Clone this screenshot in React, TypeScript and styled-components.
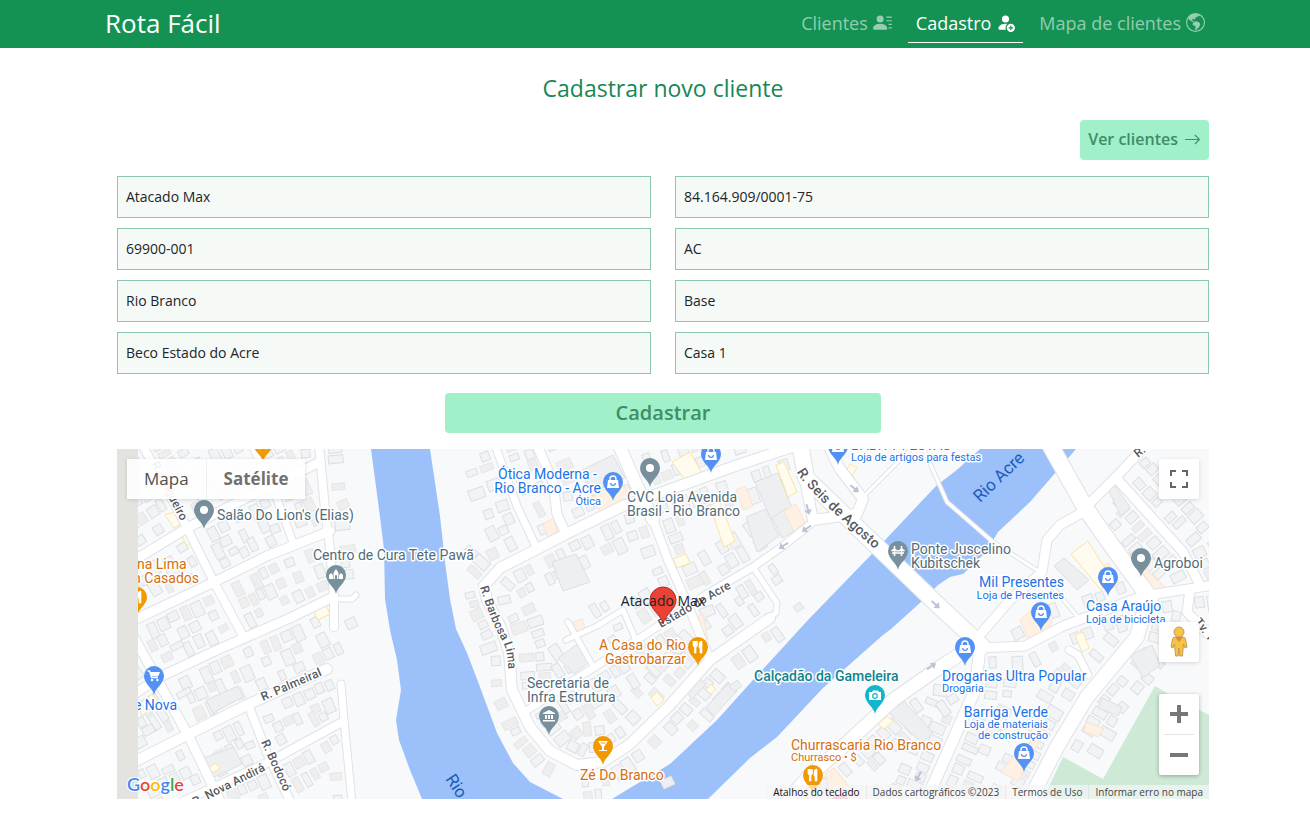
import React from "react";
import styled, { createGlobalStyle, css } from "styled-components";
import {
  BsArrowRight,
  BsGlobeAmericas,
  BsPersonFillAdd,
  BsPersonLinesFill,
} from "react-icons/bs";

const GlobalStyle = createGlobalStyle`
  *, *::before, *::after { box-sizing: border-box; }
  body {
    margin: 0;
    background: #fff;
    color: #212529;
    font-family: "Open Sans", "Noto Sans", sans-serif;
    font-size: 16px;
  }
  button, input { font-family: inherit; }
`;

/* ---------- Header ---------- */

const Header = styled.header`
  background: #149253;
`;

const HeaderInner = styled.div`
  display: flex;
  align-items: center;
  justify-content: space-between;
  max-width: 1116px;
  height: 48px;
  margin: 0 auto;
  padding-bottom: 2px;
`;

const Brand = styled.a`
  padding-left: 8px;
  color: #fff;
  font-size: 26px;
  line-height: 40px;
  text-decoration: none;
`;

const Nav = styled.nav`
  display: flex;
  gap: 8px;
`;

const NavLink = styled.a<{ $active?: boolean }>`
  display: flex;
  align-items: center;
  gap: 5px;
  height: 40px;
  padding: 0 8px;
  border-bottom: 1px solid ${(p) => (p.$active ? "#fff" : "transparent")};
  color: ${(p) => (p.$active ? "#fff" : "rgba(255, 255, 255, 0.55)")};
  font-size: 18px;
  font-weight: ${(p) => (p.$active ? 500 : 400)};
  text-decoration: none;
  white-space: nowrap;
`;

/* ---------- Form ---------- */

const Page = styled.main`
  max-width: 1116px;
  margin: 0 auto;
  padding: 24px 4px 24px 20px;
`;

const Title = styled.h1`
  margin: 0;
  color: #198754;
  font-size: 23px;
  font-weight: 400;
  line-height: 32px;
  text-align: center;
`;

const Actions = styled.div`
  display: flex;
  justify-content: flex-end;
  margin: 16px 0;
`;

const buttonLook = css`
  height: 40px;
  border: 0;
  border-radius: 4px;
  background: #a0f1c9;
  color: #408c67;
  font-weight: 600;
`;

const ListButton = styled.button`
  ${buttonLook}
  display: flex;
  align-items: center;
  gap: 6px;
  padding: 0 8px 2px;
  font-size: 16px;
`;

const Fields = styled.div`
  display: grid;
  grid-template-columns: 1fr 1fr;
  gap: 10px 24px;
`;

const Field = styled.input`
  width: 100%;
  height: 42px;
  padding: 0 8px 2px;
  border: 1px solid #8ac9a9;
  border-radius: 0;
  background: #f5faf7;
  color: #212529;
  font-size: 14px;
`;

const SubmitButton = styled.button`
  ${buttonLook}
  display: block;
  width: 40%;
  margin: 19px auto 16px;
  padding-bottom: 2px;
  font-size: 20px;
`;

/* ---------- Map shell and controls ---------- */

const MapBox = styled.section`
  position: relative;
  height: 350px;
  overflow: hidden;
  background: #e5e3df;
`;

const MapCanvas = styled.svg`
  display: block;
  width: 100%;
  height: 100%;
  font-family: Roboto, sans-serif;
`;

const MapTypes = styled.div`
  position: absolute;
  top: 10px;
  left: 10px;
  display: flex;
  border-radius: 2px;
  box-shadow: 0 1px 4px rgba(0, 0, 0, 0.15);
  opacity: 0.92;
`;

const MapTypeButton = styled.button<{ $strong?: boolean }>`
  height: 40px;
  padding: 0 17px 2px;
  border: 0;
  border-left: ${(p) => (p.$strong ? "1px solid #f0f0f0" : "0")};
  background: #fff;
  color: ${(p) => (p.$strong ? "#666" : "#444")};
  font-size: 17px;
  font-weight: ${(p) => (p.$strong ? 700 : 400)};
`;

const SideControls = styled.div`
  position: absolute;
  top: 10px;
  right: 10px;
  bottom: 24px;
  display: flex;
  flex-direction: column;
  width: 40px;
`;

const SquareButton = styled.button`
  display: grid;
  place-items: center;
  width: 40px;
  height: 40px;
  padding: 0;
  border: 0;
  border-radius: 2px;
  background: rgba(255, 255, 255, 0.92);
  box-shadow: 0 1px 4px rgba(0, 0, 0, 0.15);
`;

const PegmanButton = styled(SquareButton)`
  margin-top: auto;
  margin-bottom: 32px;
`;

const ZoomGroup = styled.div`
  border-radius: 2px;
  background: #fff;
  box-shadow: 0 1px 4px rgba(0, 0, 0, 0.3);
`;

const ZoomButton = styled(SquareButton)`
  background: none;
  box-shadow: none;
`;

const ZoomRule = styled.div`
  height: 1px;
  margin: 0 5px;
  background: #e6e6e6;
`;

const Attribution = styled.div`
  position: absolute;
  right: 0;
  bottom: 0;
  display: flex;
  height: 14px;
  background: rgba(245, 245, 245, 0.7);
  color: #444;
  font-size: 10px;
  line-height: 14px;
`;

const AttributionItem = styled.a<{ $strong?: boolean }>`
  padding: 0 6px;
  border-left: 1px solid ${(p) => (p.$strong ? "transparent" : "rgba(0, 0, 0, 0.05)")};
  color: ${(p) => (p.$strong ? "#111" : "#444")};
  text-decoration: none;
  white-space: nowrap;
`;

/* ---------- Map data ---------- */

type Pt = [number, number];
type Road = { w: number; pts: Pt[]; lots?: number; side?: "l" | "r" };

const RIVER: Pt[][] = [
  [
    [371, 449], [379, 509], [384, 549], [385, 599], [390, 630], [397, 660], [401, 690],
    [396, 720], [399, 740], [410, 770], [422, 799], [563, 799], [530, 782], [513, 763],
    [497, 733], [480, 687], [467, 653], [456, 629], [450, 599], [445, 562], [440, 516], [430, 449],
  ],
  [
    [612, 799], [630, 788], [670, 764], [717, 720], [753, 680], [808, 620], [870, 556], [936, 486],
    [958, 469], [980, 449], [1076, 449], [1030, 502], [998, 532], [986, 552], [963, 574],
    [950, 577], [938, 585], [921, 602], [891, 629], [883, 635], [823, 688], [777, 737],
    [750, 758], [708, 799],
  ],
];

const PARK: Pt[] = [
  [1155, 686], [1170, 695], [1209, 715], [1209, 799], [1043, 799], [1063, 757], [1103, 779],
];

const ROADS: Road[] = [
  { w: 9, lots: 3, pts: [[130, 563], [187, 528], [262, 490], [320, 462]] },
  { w: 9, lots: 3, pts: [[130, 622], [214, 582], [267, 556], [330, 531]] },
  { w: 9, lots: 3, pts: [[130, 697], [160, 677], [217, 650], [290, 618], [333, 597]] },
  { w: 10, lots: 3, pts: [[130, 764], [187, 735], [247, 705], [327, 669]] },
  { w: 8, lots: 2, pts: [[184, 801], [267, 763], [342, 722]] },
  { w: 8, lots: 2, pts: [[142, 445], [160, 476], [184, 522], [214, 582], [243, 636]] },
  { w: 7, lots: 1, pts: [[252, 445], [277, 499], [294, 545]] },
  { w: 9, lots: 2, pts: [[130, 630], [189, 737], [221, 803]] },
  { w: 8, lots: 2, pts: [[249, 707], [267, 753], [291, 803]] },
  { w: 8, lots: 1, pts: [[319, 445], [325, 509], [330, 549], [334, 596], [334, 627]] },
  { w: 7, lots: 1, pts: [[341, 684], [344, 720], [352, 803]] },
  { w: 5, pts: [[334, 599], [352, 599], [356, 595]] },
  {
    w: 10, lots: 2,
    pts: [[795, 446], [735, 466], [660, 493], [623, 506], [570, 532], [537, 549], [500, 568], [484, 586], [487, 600], [500, 626], [509, 652], [512, 690], [530, 727], [550, 751], [577, 765], [603, 762], [630, 744], [670, 705], [710, 660], [770, 618]],
    side: "l",
  },
  { w: 7, lots: 2, pts: [[495, 445], [517, 506], [537, 549]] },
  { w: 9, lots: 1, pts: [[537, 445], [553, 482], [557, 514], [565, 532]] },
  { w: 12, pts: [[618, 443], [637, 486], [653, 520]] },
  { w: 8, lots: 1, pts: [[648, 506], [668, 560], [690, 610], [708, 655]] },
  { w: 7, lots: 2, pts: [[523, 713], [590, 670], [637, 640], [707, 594], [753, 567], [783, 546], [813, 522]] },
  { w: 5, lots: 1, pts: [[755, 570], [777, 603], [776, 613], [735, 640]] },
  { w: 5, lots: 1, pts: [[566, 640], [597, 626], [623, 610], [635, 638]] },
  { w: 5, pts: [[568, 622], [594, 668]] },
  { w: 10, pts: [[800, 445], [803, 470], [813, 520], [857, 514], [863, 499], [840, 469], [827, 443]] },
  { w: 3, pts: [[863, 497], [915, 445]] },
  { w: 3, pts: [[921, 443], [947, 502], [993, 542], [1040, 572], [1077, 616]] },
  { w: 9, pts: [[1083, 512], [1060, 525], [1047, 540], [1042, 572], [1010, 600], [980, 635]] },
  { w: 9, pts: [[1087, 506], [1117, 476], [1148, 443]] },
  { w: 9, lots: 2, pts: [[1117, 479], [1183, 552], [1200, 585]] },
  { w: 9, lots: 1, pts: [[1214, 585], [1143, 596], [1063, 626], [1025, 646], [980, 648]] },
  { w: 9, pts: [[1190, 590], [1187, 612], [1214, 640]] },
  { w: 11, lots: 2, pts: [[980, 648], [975, 690], [950, 747], [925, 803]] },
  { w: 13, lots: 2, side: "r", pts: [[975, 645], [940, 667], [893, 700], [847, 743], [807, 778], [786, 803]] },
  { w: 14, lots: 2, pts: [[1147, 600], [1137, 637], [1087, 697], [1057, 747], [1028, 803]] },
  { w: 7, pts: [[1088, 675], [1078, 655], [1069, 650]] },
  { w: 16, pts: [[1049, 443], [1086, 509], [1112, 546], [1150, 598]] },
  { w: 16, pts: [[800, 443], [806, 478], [940, 607], [982, 646]] },
];

const line = (pts: Pt[]) => "M" + pts.map((p) => p.join(" ")).join("L");
const area = (pts: Pt[]) => line(pts) + "Z";

function distanceToSegment([px, py]: Pt, [ax, ay]: Pt, [bx, by]: Pt) {
  const dx = bx - ax;
  const dy = by - ay;
  const t = Math.max(0, Math.min(1, ((px - ax) * dx + (py - ay) * dy) / (dx * dx + dy * dy)));
  return Math.hypot(px - ax - t * dx, py - ay - t * dy);
}

function inside([x, y]: Pt, poly: Pt[]) {
  let hit = false;
  for (let i = 0, j = poly.length - 1; i < poly.length; j = i++) {
    const [xi, yi] = poly[i];
    const [xj, yj] = poly[j];
    if (yi > y !== yj > y && x < ((xj - xi) * (y - yi)) / (yj - yi) + xi) hit = !hit;
  }
  return hit;
}

type Lot = { x: number; y: number; w: number; h: number; a: number; shade: boolean };

/* Lots are laid in rows behind each road and dropped where they would meet a road, water or each other. */
function buildLots(): Lot[] {
  let seed = 17;
  const rnd = () => {
    seed = (seed * 16807) % 2147483647;
    return seed / 2147483647;
  };
  const lots: Lot[] = [];
  for (const road of ROADS) {
    for (let row = 0; row < (road.lots ?? 0); row++) {
      for (const side of [1, -1]) {
        if (road.side === "r" && side === 1) continue;
        for (let i = 1; i < road.pts.length; i++) {
          const [ax, ay] = road.pts[i - 1];
          const [bx, by] = road.pts[i];
          const len = Math.hypot(bx - ax, by - ay);
          const ux = (bx - ax) / len;
          const uy = (by - ay) / len;
          let at = 3;
          while (at < len) {
            const w = 6 + rnd() * 5;
            const h = 8 + rnd() * 8;
            const off = (road.w / 2 + 4 + h / 2 + row * 17 + rnd() * 2) * side;
            const c: Pt = [ax + ux * (at + w / 2) - uy * off, ay + uy * (at + w / 2) + ux * off];
            at += w + 1 + rnd() * 3;
            const reach = Math.max(w, h) / 2;
            const clearOfRoads = ROADS.every((r) =>
              r.pts.every((p, k) => k === 0 || distanceToSegment(c, r.pts[k - 1], p) > r.w / 2 + reach + 1)
            );
            const clearOfLots = lots.every(
              (o) => Math.hypot(o.x - c[0], o.y - c[1]) > (Math.min(o.w, o.h) + Math.min(w, h)) / 2 + 2
            );
            const onWater = [...RIVER, PARK].some((p) =>
              [[0, 0], [14, 0], [-14, 0], [0, 14], [0, -14]].some(([ox, oy]) => inside([c[0] + ox, c[1] + oy], p))
            );
            const openBank = (c[0] > 355 && c[0] < 468) || (c[0] > 785 && c[0] < 990 && c[1] < 660);
            if (clearOfRoads && clearOfLots && !onWater && !openBank && rnd() > 0.12) {
              lots.push({ x: c[0], y: c[1], w, h, a: (Math.atan2(uy, ux) * 180) / Math.PI, shade: rnd() > 0.75 });
            }
          }
        }
      }
    }
  }
  return lots;
}

const LOTS = buildLots();

const BIG_BUILDINGS: Pt[][] = [
  [[582, 470], [613, 455], [625, 478], [592, 492]],
  [[755, 482], [778, 473], [792, 508], [771, 520]],
  [[552, 562], [576, 554], [590, 582], [563, 591]],
  [[706, 707], [729, 683], [737, 691], [714, 716]],
  [[686, 692], [700, 679], [706, 684], [692, 699]],
  [[729, 686], [737, 680], [742, 686], [734, 692]],
  [[660, 781], [671, 776], [675, 784], [664, 789]],
  [[746, 517], [766, 509], [779, 536], [757, 552]],
  [[772, 518], [787, 508], [797, 530], [782, 538]],
  [[558, 658], [576, 645], [592, 660], [574, 674]],
  [[888, 712], [904, 701], [933, 733], [922, 743]],
  [[1054, 566], [1064, 558], [1089, 580], [1077, 590]],
  [[1107, 487], [1114, 484], [1130, 507], [1121, 516]],
  [[1130, 655], [1152, 645], [1160, 665], [1143, 678]],
  [[1102, 698], [1122, 707], [1118, 716], [1098, 708]],
  [[793, 607], [800, 602], [804, 608], [797, 612]],
  [[198, 760], [234, 747], [242, 764], [208, 780]],
  [[206, 700], [238, 686], [243, 697], [213, 713]],
];

const SHOPS: Pt[][] = [
  [[672, 462], [690, 452], [703, 475], [688, 484]],
  [[776, 465], [784, 462], [797, 492], [788, 497]],
  [[710, 506], [719, 500], [735, 541], [724, 547]],
  [[1071, 554], [1088, 541], [1109, 575], [1101, 590]],
  [[165, 515], [174, 512], [181, 524], [174, 528]],
  [[182, 536], [188, 533], [192, 543], [186, 545]],
  [[313, 610], [326, 605], [330, 614], [318, 620]],
  [[706, 690], [711, 684], [716, 689], [711, 694]],
  [[878, 724], [887, 716], [893, 721], [884, 729]],
  [[209, 768], [215, 763], [220, 768], [213, 773]],
  [[651, 698], [657, 692], [664, 700], [657, 706]],
  [[139, 705], [152, 694], [158, 702], [142, 716]],
  [[1075, 635], [1083, 632], [1089, 648], [1082, 652]],
  [[845, 473], [850, 464], [857, 468], [849, 480]],
  [[673, 559], [686, 554], [690, 563], [677, 568]],
];

const CAFES: Pt[][] = [
  [[543, 524], [554, 518], [558, 535], [549, 540]],
  [[588, 500], [602, 490], [624, 486], [629, 496], [605, 515]],
  [[736, 490], [745, 486], [753, 506], [743, 510]],
  [[784, 511], [796, 504], [805, 522], [794, 532]],
  [[573, 622], [582, 619], [587, 634], [579, 638]],
  [[1095, 570], [1109, 563], [1119, 584], [1106, 592]],
  [[1129, 552], [1147, 570], [1168, 590], [1158, 597], [1140, 578]],
  [[1020, 620], [1034, 608], [1052, 620], [1048, 634], [1028, 638]],
  [[1001, 772], [1020, 748], [1041, 738], [1018, 781]],
  [[1086, 722], [1104, 729], [1098, 737], [1084, 731]],
  [[825, 774], [834, 768], [856, 795], [832, 799]],
  [[695, 618], [703, 614], [708, 640], [702, 641]],
];

const ARROWS: { x: number; y: number; a: number }[] = [
  { x: 855, y: 489, a: 40 }, { x: 808, y: 510, a: 75 }, { x: 806, y: 529, a: 145 },
  { x: 783, y: 546, a: 148 }, { x: 936, y: 605, a: 42 }, { x: 932, y: 666, a: -35 },
  { x: 918, y: 777, a: 120 },
];

const TONES = {
  slate: "#78909c",
  blue: "#5491f5",
  orange: "#f29900",
  teal: "#12b5cb",
};

const INKS = {
  slate: "#526c7a",
  blue: "#1a73e8",
  orange: "#d56e0c",
  teal: "#0c8591",
};

type Tone = keyof typeof TONES;
type Glyph = "dot" | "bag" | "fork" | "glass" | "bank" | "camera" | "cart" | "bridge" | "church";

const GLYPHS: Record<Glyph, React.ReactNode> = {
  dot: <circle r="4" fill="#fff" />,
  bag: (
    <>
      <path d="M-5 -2H5L6 6H-6Z" fill="#fff" />
      <path d="M-3 -2V-3A3 3 0 0 1 3 -3V-2" fill="none" stroke="#fff" strokeWidth="1.4" />
      <path d="M-2.4 1A2.4 2.4 0 0 0 2.4 1" fill="none" stroke={TONES.blue} strokeWidth="1.3" />
    </>
  ),
  fork: (
    <path d="M-5 -6V-2Q-5 0 -3.6 0V6H-2V0Q-.6 0 -.6 -2V-6M-2.8 -6V-2M2 6V1H1V-3Q1 -6 4 -6V6Z" fill="#fff" stroke="#fff" strokeWidth=".7" />
  ),
  glass: <path d="M-5 -5H5L1 1V4H4V5H-4V4H-1V1ZM-2.6 -3.6H2.6L1.8 -2.4H-1.8Z" fill="#fff" fillRule="evenodd" />,
  bank: <path d="M0 -6L6 -3V-2H-6V-3ZM-4 -1H-2V3H-4ZM-1 -1H1V3H-1ZM2 -1H4V3H2ZM-6 4H6V5.4H-6Z" fill="#fff" />,
  camera: (
    <>
      <path d="M-6 -3H-3L-2 -4.6H3L4 -3H6V5H-6Z" fill="#fff" />
      <circle cy="1" r="2.3" fill="#fff" stroke={TONES.teal} strokeWidth="1.2" />
    </>
  ),
  cart: (
    <>
      <path d="M-6.5 -5H-4.5L-2.4 1.6H4" fill="none" stroke="#fff" strokeWidth="1.4" />
      <path d="M-4 -4H6L4 .6H-2.6Z" fill="#fff" />
      <circle cx="-2" cy="4" r="1.2" fill="#fff" />
      <circle cx="3.4" cy="4" r="1.2" fill="#fff" />
    </>
  ),
  bridge: (
    <path
      d="M-3.5 -5V5M3.5 -5V5M-6 2H6M-3.5 -2Q0 2 3.5 -2M-6.5 0L-3.5 -2M6.5 0L3.5 -2"
      fill="none"
      stroke="#fff"
      strokeWidth="1.6"
    />
  ),
  church: <path d="M-7 4V0L-5 -2L-3 0V4ZM-2.4 4V-2.5L0 -6L2.4 -2.5V4H1V1A1 1 0 0 0 -1 1V4ZM3 4V0L5 -2L7 0V4Z" fill="#fff" />,
};

const PINS: { x: number; y: number; tone: Tone; glyph: Glyph }[] = [
  { x: 204, y: 510, tone: "slate", glyph: "dot" },
  { x: 336, y: 575, tone: "slate", glyph: "church" },
  { x: 613, y: 482, tone: "blue", glyph: "bag" },
  { x: 650, y: 468, tone: "slate", glyph: "dot" },
  { x: 711, y: 454, tone: "blue", glyph: "bag" },
  { x: 838, y: 446, tone: "blue", glyph: "bag" },
  { x: 898, y: 551, tone: "slate", glyph: "bridge" },
  { x: 1141, y: 558, tone: "slate", glyph: "dot" },
  { x: 1108, y: 577, tone: "blue", glyph: "bag" },
  { x: 1041, y: 612, tone: "blue", glyph: "bag" },
  { x: 965, y: 647, tone: "blue", glyph: "bag" },
  { x: 1024, y: 753, tone: "blue", glyph: "bag" },
  { x: 875, y: 695, tone: "teal", glyph: "camera" },
  { x: 813, y: 775, tone: "orange", glyph: "fork" },
  { x: 698, y: 647, tone: "orange", glyph: "fork" },
  { x: 603, y: 746, tone: "orange", glyph: "glass" },
  { x: 549, y: 716, tone: "slate", glyph: "bank" },
  { x: 154, y: 676, tone: "blue", glyph: "cart" },
  { x: 137, y: 597, tone: "orange", glyph: "fork" },
  { x: 263, y: 443, tone: "orange", glyph: "fork" },
];

type Label = { x: number; y: number; text: string; tone: Tone; size?: number; end?: boolean; bold?: boolean };

const LABELS: Label[] = [
  { x: 217, y: 520, text: "Salão Do Lion's (Elias)", tone: "slate" },
  { x: 313, y: 560, text: "Centro de Cura Tete Pawã", tone: "slate" },
  { x: 137, y: 569, text: "na Lima", tone: "orange" },
  { x: 199, y: 583, text: "n Casados", tone: "orange", end: true },
  { x: 177, y: 710, text: "e Nova", tone: "blue", end: true },
  { x: 597, y: 479, text: "Ótica Moderna -", tone: "blue", end: true },
  { x: 601, y: 493, text: "Rio Branco - Acre", tone: "blue", end: true },
  { x: 601, y: 505, text: "Ótica", tone: "blue", size: 11, end: true },
  { x: 627, y: 502, text: "CVC Loja Avenida", tone: "slate" },
  { x: 627, y: 516, text: "Brasil - Rio Branco", tone: "slate" },
  { x: 851, y: 450, text: "BABITY FESTAS", tone: "blue" },
  { x: 851, y: 461, text: "Loja de artigos para festas", tone: "blue", size: 11 },
  { x: 911, y: 554, text: "Ponte Juscelino", tone: "slate" },
  { x: 911, y: 568, text: "Kubitschek", tone: "slate" },
  { x: 1154, y: 568, text: "Agroboi", tone: "slate" },
  { x: 1064, y: 587, text: "Mil Presentes", tone: "blue", end: true },
  { x: 1064, y: 599, text: "Loja de Presentes", tone: "blue", size: 11, end: true },
  { x: 1086, y: 611, text: "Casa Araújo", tone: "blue" },
  { x: 1086, y: 623, text: "Loja de bicicleta", tone: "blue", size: 11 },
  { x: 942, y: 681, text: "Drogarias Ultra Popular", tone: "blue" },
  { x: 942, y: 692, text: "Drogaria", tone: "blue", size: 11 },
  { x: 1048, y: 717, text: "Barriga Verde", tone: "blue", end: true },
  { x: 1048, y: 728, text: "Loja de materiais", tone: "blue", size: 11, end: true },
  { x: 1048, y: 739, text: "de construção", tone: "blue", size: 11, end: true },
  { x: 754, y: 681, text: "Calçadão da Gameleira", tone: "teal", bold: true },
  { x: 686, y: 650, text: "A Casa do Rio", tone: "orange", end: true },
  { x: 686, y: 664, text: "Gastrobarzar", tone: "orange", end: true },
  { x: 527, y: 688, text: "Secretaria de", tone: "slate" },
  { x: 527, y: 702, text: "Infra Estrutura", tone: "slate" },
  { x: 580, y: 780, text: "Zé Do Branco", tone: "orange" },
  { x: 791, y: 750, text: "Churrascaria Rio Branco", tone: "orange" },
  { x: 791, y: 761, text: "Churrasco • $", tone: "orange", size: 11 },
];

const STREET_NAMES: { id: string; d: string; text: string; size: number; ink?: string }[] = [
  { id: "salgueiro", d: "M151 464L186 531", text: "R. Salgueiro", size: 12 },
  { id: "palmeiral", d: "M263 701L330 672", text: "R. Palmeiral", size: 12 },
  { id: "bodoco", d: "M261 742L289 803", text: "R. Bodocó", size: 12 },
  { id: "andira", d: "M195 806L270 768", text: "R. Nova Andirá", size: 12 },
  { id: "barbosa", d: "M480 587Q492 625 503 642Q509 655 508 675", text: "R. Barbosa Lima", size: 12 },
  { id: "estado", d: "M661 628L740 583", text: "Estado do Acre", size: 12 },
  { id: "agosto", d: "M797 472Q805 490 890 562", text: "R. Seis de Agosto", size: 14 },
  { id: "tv", d: "M1194 622L1214 648", text: "Tv. Tarauacá", size: 12 },
  { id: "top", d: "M1138 458L1160 440", text: "R. Acre", size: 12 },
  { id: "rioacre", d: "M980 503L1035 450", text: "Rio Acre", size: 17, ink: "#1b5cb8" },
  { id: "rio", d: "M445 779L470 817", text: "Rio Acre", size: 17, ink: "#1b5cb8" },
];

const CityMap = () => (
  <MapCanvas viewBox="117 449 1092 350" preserveAspectRatio="xMidYMid slice" role="img" aria-label="Mapa de Rio Branco">
    <defs>
      <clipPath id="tiles">
        <rect x="138" y="449" width="1071" height="350" />
      </clipPath>
      {STREET_NAMES.map((s) => (
        <path key={s.id} id={s.id} d={s.d} />
      ))}
    </defs>
    <rect x="117" y="449" width="1092" height="350" fill="#e5e3df" />
    <g clipPath="url(#tiles)">
      <rect x="138" y="449" width="1071" height="350" fill="#f8f9fb" />
      {RIVER.map((r, i) => (
        <path key={i} d={area(r)} fill="#9cc0f9" />
      ))}
      <path d={area(PARK)} fill="#ceead6" />
      <g strokeWidth="1">
        {LOTS.map((l, i) => (
          <rect
            key={i}
            x={-l.w / 2}
            y={-l.h / 2}
            width={l.w}
            height={l.h}
            transform={`translate(${l.x} ${l.y}) rotate(${l.a})`}
            fill={l.shade ? "#eeeeef" : "#f1f3f4"}
            stroke={l.shade ? "#e6e6e8" : "#dcdfe4"}
          />
        ))}
        {BIG_BUILDINGS.map((b, i) => (
          <path key={i} d={area(b)} fill="#eeeff0" stroke="#dcdfe4" />
        ))}
        {CAFES.map((b, i) => (
          <path key={i} d={area(b)} fill="#fef1e4" stroke="#fbe3cb" />
        ))}
        {SHOPS.map((b, i) => (
          <path key={i} d={area(b)} fill="#fffbee" stroke="#fde4a0" />
        ))}
      </g>
      <g fill="none" strokeLinecap="round" strokeLinejoin="round">
        {ROADS.map((r, i) => (
          <path key={i} d={line(r.pts)} stroke="#dfe2e8" strokeWidth={r.w + 2} />
        ))}
        {ROADS.map((r, i) => (
          <path key={i} d={line(r.pts)} stroke="#fff" strokeWidth={r.w} />
        ))}
      </g>
      {ARROWS.map((a, i) => (
        <path
          key={i}
          d="M-6 -1H0V-4L5 0L0 4V1H-6Z"
          fill="#bcc3d4"
          transform={`translate(${a.x} ${a.y}) rotate(${a.a})`}
        />
      ))}
      <circle cx="840" cy="803" r="9" fill="#f48fb1" />
      {STREET_NAMES.map((s) => (
        <text
          key={s.id}
          fontSize={s.size}
          fontWeight={s.ink ? 400 : 500}
          fill={s.ink ?? "#55595e"}
          stroke={s.ink ? "none" : "#fff"}
          strokeWidth="3"
          paintOrder="stroke"
        >
          <textPath href={`#${s.id}`}>{s.text}</textPath>
        </text>
      ))}
      {PINS.map((p) => (
        <g key={`${p.x}-${p.y}`} transform={`translate(${p.x} ${p.y})`}>
          <path
            d="M0 19C-1 12 -10 8 -10 0A10 10 0 0 1 10 0C10 8 1 12 0 19Z"
            fill={TONES[p.tone]}
          />
          {GLYPHS[p.glyph]}
        </g>
      ))}
      {LABELS.map((l) => (
        <text
          key={l.text}
          x={l.x}
          y={l.y}
          fontSize={l.size ?? 14}
          fontWeight={l.bold ? 500 : 400}
          fill={INKS[l.tone]}
          textAnchor={l.end ? "end" : "start"}
          stroke="#fff"
          strokeWidth="3"
          strokeLinejoin="round"
          paintOrder="stroke"
        >
          {l.text}
        </text>
      ))}
    </g>
    <path
      d="M663 624C661 614 650 610 650 600A13 13 0 0 1 676 600C676 610 665 614 663 624Z"
      fill="#ea4335"
      stroke="#b92a20"
      strokeWidth="1"
    />
    <text x="663" y="606" textAnchor="middle" fontSize="14" fill="#222" fontFamily="Open Sans, sans-serif">
      Atacado Max
    </text>
    <text
      x="127"
      y="791"
      fontSize="18"
      fontWeight="600"
      fontFamily="Lato, sans-serif"
      stroke="#fff"
      strokeWidth="2"
      paintOrder="stroke"
    >
      <tspan fill="#4285f4">G</tspan>
      <tspan fill="#ea4335">o</tspan>
      <tspan fill="#fbbc04">o</tspan>
      <tspan fill="#4285f4">g</tspan>
      <tspan fill="#34a853">l</tspan>
      <tspan fill="#ea4335">e</tspan>
    </text>
  </MapCanvas>
);

/* ---------- Page ---------- */

const FIELDS = [
  { label: "Nome", value: "Atacado Max" },
  { label: "CNPJ", value: "84.164.909/0001-75" },
  { label: "CEP", value: "69900-001" },
  { label: "Estado", value: "AC" },
  { label: "Cidade", value: "Rio Branco" },
  { label: "Bairro", value: "Base" },
  { label: "Rua", value: "Beco Estado do Acre" },
  { label: "Número", value: "Casa 1" },
];

export default function App() {
  return (
    <>
      <GlobalStyle />
      <Header>
        <HeaderInner>
          <Brand href="#">Rota Fácil</Brand>
          <Nav>
            <NavLink href="#clientes">
              Clientes <BsPersonLinesFill size={19} />
            </NavLink>
            <NavLink href="#cadastro" $active aria-current="page">
              Cadastro <BsPersonFillAdd size={19} />
            </NavLink>
            <NavLink href="#mapa">
              Mapa de clientes <BsGlobeAmericas size={19} />
            </NavLink>
          </Nav>
        </HeaderInner>
      </Header>
      <Page>
        <Title>Cadastrar novo cliente</Title>
        <Actions>
          <ListButton type="button">
            Ver clientes <BsArrowRight size={17} />
          </ListButton>
        </Actions>
        <form onSubmit={(e) => e.preventDefault()}>
          <Fields>
            {FIELDS.map((f) => (
              <Field key={f.label} type="text" aria-label={f.label} defaultValue={f.value} />
            ))}
          </Fields>
          <SubmitButton type="submit">Cadastrar</SubmitButton>
        </form>
        <MapBox>
          <CityMap />
          <MapTypes>
            <MapTypeButton type="button">Mapa</MapTypeButton>
            <MapTypeButton type="button" $strong>
              Satélite
            </MapTypeButton>
          </MapTypes>
          <SideControls>
            <SquareButton type="button" aria-label="Tela cheia">
              <svg width="18" height="18" viewBox="0 0 18 18" fill="#666">
                <path d="M0 0H6V2H2V6H0ZM12 0H18V6H16V2H12ZM0 12H2V16H6V18H0ZM16 12H18V18H12V16H16Z" />
              </svg>
            </SquareButton>
            <PegmanButton type="button" aria-label="Street View">
              <svg width="18" height="32" viewBox="0 0 18 32">
                <path
                  d="M5 11H13Q15 11 15.5 13L17 21L15 22L13.5 18L12.5 30H9.800L9 22L8.200 30H5.500L4.500 18L3 22L1 21L2.500 13Q3 11 5 11Z"
                  fill="#f6c445"
                  stroke="#b98a4a"
                  strokeWidth=".8"
                />
                <circle cx="9" cy="6" r="5" fill="#f6c445" stroke="#b98a4a" strokeWidth=".8" />
                <path d="M5 11H13L9 16Z" fill="#e8853e" />
              </svg>
            </PegmanButton>
            <ZoomGroup>
              <ZoomButton type="button" aria-label="Aumentar o zoom">
                <svg width="18" height="18" viewBox="0 0 18 18" fill="#777">
                  <path d="M7 0H11V7H18V11H11V18H7V11H0V7H7Z" />
                </svg>
              </ZoomButton>
              <ZoomRule />
              <ZoomButton type="button" aria-label="Diminuir o zoom">
                <svg width="18" height="18" viewBox="0 0 18 18" fill="#777">
                  <path d="M0 7H18V11H0Z" />
                </svg>
              </ZoomButton>
            </ZoomGroup>
          </SideControls>
          <Attribution>
            <AttributionItem as="span" $strong>
              Atalhos do teclado
            </AttributionItem>
            <AttributionItem as="span">Dados cartográficos ©2023</AttributionItem>
            <AttributionItem href="#termos">Termos de Uso</AttributionItem>
            <AttributionItem href="#erro">Informar erro no mapa</AttributionItem>
          </Attribution>
        </MapBox>
      </Page>
    </>
  );
}
